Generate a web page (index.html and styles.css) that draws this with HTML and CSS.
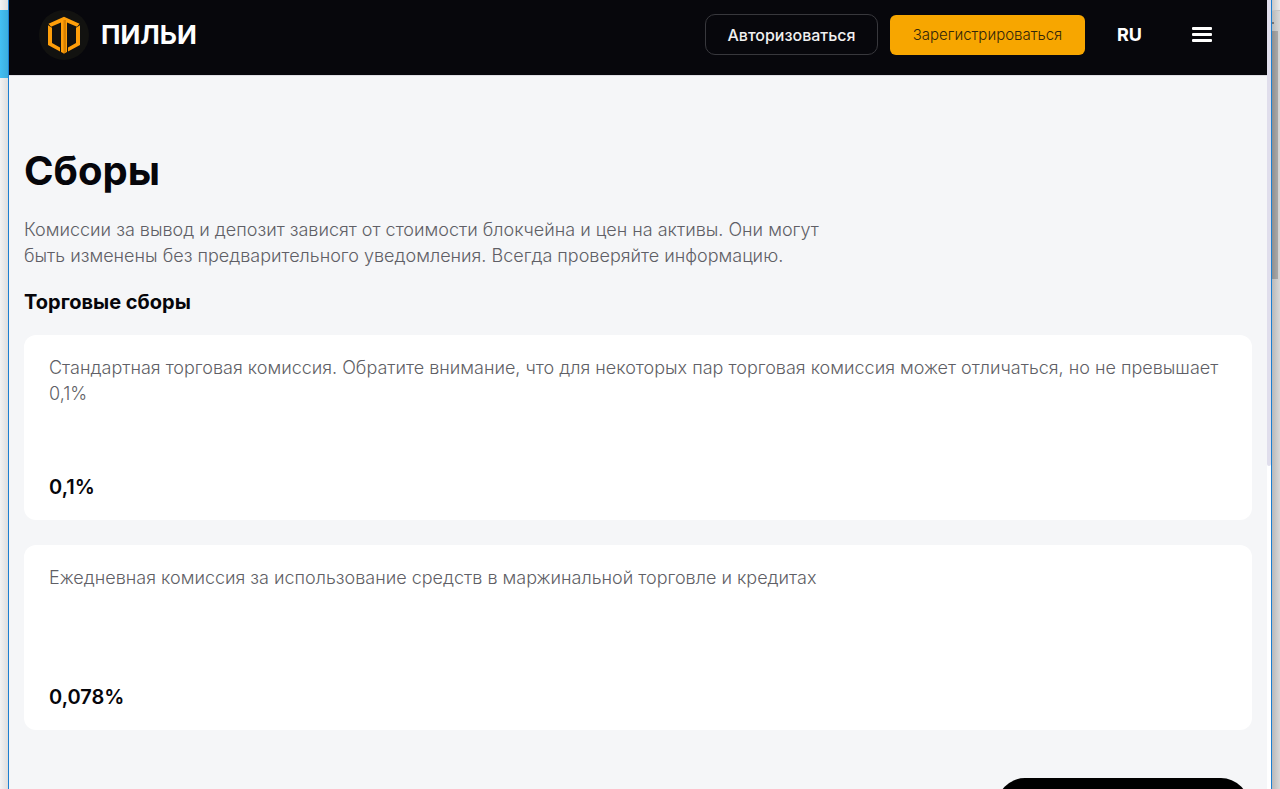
FILE: index.html
```html
<!DOCTYPE html>
<html lang="ru">
<head>
    <meta charset="UTF-8">
    <meta name="viewport" content="width=device-width, initial-scale=1.0">
    <title>Сборы</title>
    <link rel="stylesheet" href="styles.css">
</head>
<body>

    <div class="edge edge-left">
        <div class="edge-accent"></div>
    </div>

    <div class="window">
        <div class="page">
            <header class="header">
                <a class="brand" href="#">
                    <svg class="logo" viewBox="0 0 50 50" aria-hidden="true">
                        <circle cx="25" cy="25" r="25" fill="#121210"/>
                        <g fill="#ff9f0a">
                            <path d="M25 6.8L9.5 13.8L12 16.8L22 12.6H28L38 16.8L40.5 13.8Z"/>
                            <path d="M9 15.2L13 17.8V33L21 37.4V41.4L9 35Z"/>
                            <path d="M41 15.2L37 17.8V33L29 37.4V41.4L41 35Z"/>
                            <path d="M22 9H28V42L25 43.5L22 42Z"/>
                        </g>
                        <path d="M24.5 10H27V42.5L25 43.5H24.5Z" fill="#d98200"/>
                    </svg>
                    <span class="brand-name">ПИЛЬИ</span>
                </a>
                <nav class="nav">
                    <button class="btn btn-login" type="button">Авторизоваться</button>
                    <button class="btn btn-register" type="button">Зарегистрироваться</button>
                    <button class="lang" type="button">RU</button>
                    <button class="menu" type="button" aria-label="Меню">
                        <span></span>
                        <span></span>
                        <span></span>
                    </button>
                </nav>
            </header>

            <main class="content">
                <h1>Сборы</h1>
                <p class="intro">Комиссии за вывод и депозит зависят от стоимости блокчейна и цен на активы. Они могут быть изменены без предварительного уведомления. Всегда проверяйте информацию.</p>

                <h2>Торговые сборы</h2>
                <div class="cards">
                    <section class="card">
                        <p>Стандартная торговая комиссия. Обратите внимание, что для некоторых пар торговая комиссия может отличаться, но не превышает 0,1%</p>
                        <strong>0,1%</strong>
                    </section>
                    <section class="card">
                        <p>Ежедневная комиссия за использование средств в маржинальной торговле и кредитах</p>
                        <strong>0,078%</strong>
                    </section>
                </div>
            </main>
        </div>

        <div class="page-scroll">
            <div class="page-thumb"></div>
        </div>

        <!-- Support chat, rises from the bottom edge -->
        <button class="chat" type="button" aria-label="Чат"></button>
    </div>

    <div class="edge edge-right">
        <div class="edge-top"></div>
        <div class="edge-arrow"></div>
        <div class="edge-thumb"></div>
    </div>

</body>
</html>
```

FILE: styles.css
```css
* {
    box-sizing: border-box;
}

body {
    display: flex;
    height: 100vh;
    margin: 0;
    overflow: hidden;
    background: #f5f6f8;
    color: #06060b;
    font-family: Inter, "Liberation Sans", sans-serif;
}

h1,
h2,
p {
    margin: 0;
}

button {
    padding: 0;
    border: 0;
    background: none;
    font-family: inherit;
    cursor: pointer;
}

/* Strips on both sides of the window */
.edge {
    flex: none;
    width: 8px;
}

.edge-left {
    padding-top: 10px;
    background: linear-gradient(to right, #f3f3f3, #dedede);
}

.edge-accent {
    height: 68px;
    background: linear-gradient(to right, #43bff3, #3cadde);
}

.edge-right {
    background: linear-gradient(to right, #b9b9b9, #d8d8d8);
}

.edge-top {
    height: 11px;
    border-bottom: 1px solid #c4c4c4;
    background: linear-gradient(to right, #c8c8c8, #ececec);
}

.edge-arrow {
    width: 2px;
    height: 2px;
    margin: 11px 0 7px;
    background: #777777;
}

.edge-thumb {
    width: 6px;
    height: 248px;
    background: linear-gradient(to right, #909090, #a8a8a8);
}

.window {
    position: relative;
    display: flex;
    flex: 1;
    min-width: 0;
    overflow: hidden;
    border: solid #1c7fd0;
    border-width: 0 1px;
}

.page {
    flex: 1;
    min-width: 0;
    overflow: hidden;
    background: #f5f6f8;
}

.page-scroll {
    flex: none;
    width: 4px;
    background: #ffffff;
}

.page-thumb {
    height: 466px;
    border-radius: 0 0 2px 2px;
    background: #e0deec;
}

/* Header */
.header {
    display: flex;
    align-items: center;
    justify-content: space-between;
    height: 76px;
    padding: 0 55px 6px 30px;
    border-bottom: 1px solid #e0dfe6;
    background: #07070c;
}

.brand {
    display: flex;
    align-items: center;
    gap: 12px;
    color: #ffffff;
    text-decoration: none;
}

.logo {
    width: 50px;
    height: 50px;
}

.brand-name {
    font-size: 26px;
    font-weight: 700;
    line-height: 32px;
}

.nav {
    display: flex;
    align-items: center;
}

.btn {
    height: 40px;
    font-size: 16px;
}

.btn-login {
    width: 173px;
    height: 41px;
    margin-right: 12px;
    border: 1px solid #38383d;
    border-radius: 10px;
    color: #f0f0f0;
    font-weight: 500;
}

.btn-register {
    width: 195px;
    border-radius: 6px;
    background: #f7a600;
    color: #33260a;
    font-size: 15px;
    font-weight: 300;
}

.lang {
    margin: 0 50px 0 32px;
    color: #ffffff;
    font-size: 18px;
    font-weight: 700;
}

.menu {
    display: flex;
    flex-direction: column;
    gap: 3px;
    width: 20px;
}

.menu span {
    height: 3px;
    border-radius: 1px;
    background: #ffffff;
}

/* Content */
.content {
    padding: 69px 15px 0;
}

h1 {
    font-size: 40px;
    font-weight: 700;
    line-height: 52px;
}

.intro {
    max-width: 820px;
    margin: 20px 0;
}

.intro,
.card p {
    color: #5f5f66;
    font-size: 18px;
    font-weight: 300;
    line-height: 26px;
}

h2,
.card strong {
    font-size: 20px;
    font-weight: 600;
    line-height: 26px;
}

h2 {
    font-weight: 700;
}

.cards {
    display: grid;
    gap: 25px;
    margin-top: 20px;
}

.card {
    display: flex;
    flex-direction: column;
    justify-content: space-between;
    min-height: 185px;
    padding: 20px 25px;
    border-radius: 12px;
    background: #ffffff;
}

.chat {
    position: absolute;
    right: 22px;
    bottom: -45px;
    width: 252px;
    height: 56px;
    border-radius: 28px;
    background: #000000;
}
```
